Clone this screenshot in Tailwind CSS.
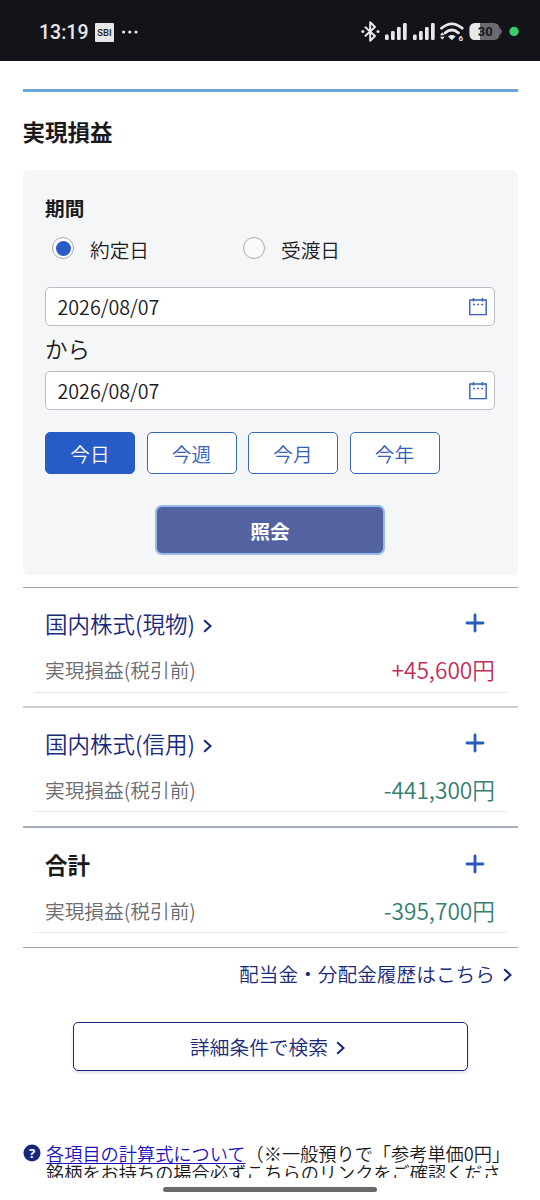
<!DOCTYPE html>
<html lang="ja">
<head>
<meta charset="utf-8">
<title>実現損益</title>
<script src="https://cdn.jsdelivr.net/npm/@tailwindcss/browser@4"></script>
</head>
<body class="bg-white">
<div class="w-[540px] h-[1200px] overflow-hidden flex flex-col font-['Noto_Sans_CJK_JP',sans-serif] font-[350] text-[19.7px] text-[#1a1a1c] leading-[30px] whitespace-nowrap">
  <header class="h-[61px] shrink-0 bg-[#121419] flex items-center pt-[3px] pl-[39px] pr-[21px] text-[#e8e8ea]">
    <span class="font-['Roboto',sans-serif] text-[19.5px] font-medium w-[49px] pt-[1px]">13:19</span>
    <span class="ml-[7px] w-[19px] h-[19px] rounded-[1px] bg-[#e6e6e6] text-[#222] font-['Roboto',sans-serif] font-medium text-[9.5px] leading-[20px] text-center">SBI</span>
    <svg class="ml-[7px]" width="18" height="6" viewBox="0 0 18 6" fill="#e8e8ea"><circle cx="2.6" cy="3" r="1.6"/><circle cx="8.8" cy="3" r="1.6"/><circle cx="15" cy="3" r="1.6"/></svg>
    <svg class="ml-auto" width="159" height="24" viewBox="0 0 159 24" fill="#e8e8ea">
      <path d="M5.500 7.200 15 16 10.200 20.800V2.200L15 7 5.500 15.800" fill="none" stroke="#e8e8ea" stroke-width="2" stroke-linejoin="round" stroke-linecap="round"/>
      <circle cx="2.800" cy="11.500" r="1.500"/><circle cx="18" cy="11.500" r="1.500"/>
      <rect x="25" y="14.500" width="3.700" height="5.500" rx="1.300"/><rect x="31" y="11" width="3.700" height="9" rx="1.300"/><rect x="37" y="7" width="3.700" height="13" rx="1.300"/><rect x="43" y="3" width="3.700" height="17" rx="1.300"/>
      <rect x="53" y="14.500" width="3.700" height="5.500" rx="1.300"/><rect x="59" y="11" width="3.700" height="9" rx="1.300"/><rect x="65" y="7" width="3.700" height="13" rx="1.300"/><rect x="71" y="3" width="3.700" height="17" rx="1.300"/>
      <path d="M81.500 8.200Q91.800-.4 102.200 8.200M85.200 12.800Q91.800 7.300 98.400 12.800" fill="none" stroke="#e8e8ea" stroke-width="2.800" stroke-linecap="round"/>
      <path d="M88 16.400Q91.800 13.600 95.600 16.400L91.800 20.300ZM80 15.200 82.300 12.300 84.600 15.200ZM80 16.800 82.300 19.700 84.600 16.800Z"/>
      <text x="98.500" y="20.500" font-family="Roboto" font-weight="700" font-size="8">6</text>
      <rect x="109.500" y="3" width="30" height="17" rx="5.500" fill="#6c6c70"/><path d="M140 8.500Q143 11.500 140 14.500Z" fill="#6c6c70" stroke="#6c6c70"/>
      <path d="M115 3H120V20H115A5.500 5.500 0 0 1 109.500 14.500V8.500A5.500 5.500 0 0 1 115 3Z"/>
      <text x="117.800" y="16" font-family="Roboto" font-weight="700" font-size="13" fill="#17191d">30</text>
      <circle cx="154" cy="11.500" r="4.700" fill="#35cf66"/>
    </svg>
  </header>

  <main class="px-[22.500px] flex flex-col">
    <div class="mt-[28px] h-[2.500px] bg-[#69a4d2]"></div>
    <h1 class="mt-[23px] h-[32px] leading-[32px] text-[22.500px] font-bold">実現損益</h1>

    <section class="mt-[23px] h-[405px] rounded-[6px] bg-[#f4f6f8] px-[22.500px] pt-[23px] flex flex-col">
      <h2 class="font-bold">期間</h2>
      <div class="mt-[12px] flex items-center h-[30px]">
        <span class="ml-[7px] mb-[3px] w-[22px] h-[22px] rounded-full border border-[#aaaab2] bg-white flex items-center justify-center"><i class="w-[15px] h-[15px] rounded-full bg-[#275bc5]"></i></span>
        <span class="ml-[16px] w-[59px]">約定日</span>
        <span class="ml-[94px] mb-[3px] w-[22px] h-[22px] rounded-full border border-[#aaaab2] bg-[#fafafa]"></span>
        <span class="ml-[16px]">受渡日</span>
      </div>
      <div class="mt-[22px] h-[39px] border-[1.500px] border-[#babdc5] rounded-[5px] bg-white flex items-center justify-between pl-[11.500px] pr-[7px]">
        <span class="pt-[2px]">2026/08/07</span>
        <svg class="mt-[1px]" width="18" height="18" viewBox="0 0 18 18" fill="none" stroke="#3460b5" stroke-width="1.400"><path d="M.8 2H17.200V16.600H.8ZM4.500 0V3.500M13.500 0V3.500"/><path d="M4.200 6.500H6M8.200 6.500H10M12.200 6.500H14"/></svg>
      </div>
      <div class="h-[45px] leading-[44px] text-[22.500px]">から</div>
      <div class="h-[39px] border-[1.500px] border-[#babdc5] rounded-[5px] bg-white flex items-center justify-between pl-[11.500px] pr-[7px]">
        <span class="pt-[2px]">2026/08/07</span>
        <svg class="mt-[1px]" width="18" height="18" viewBox="0 0 18 18" fill="none" stroke="#3460b5" stroke-width="1.400"><path d="M.8 2H17.200V16.600H.8ZM4.500 0V3.500M13.500 0V3.500"/><path d="M4.200 6.500H6M8.200 6.500H10M12.200 6.500H14"/></svg>
      </div>
      <div class="mt-[22px] flex gap-[11.500px] text-center leading-[41px] text-[#3460b5]">
        <span class="w-[90px] h-[42.500px] rounded-[5px] border border-[#275bc5] bg-[#275bc5] text-white">今日</span>
        <span class="w-[90px] h-[42.500px] rounded-[5px] border-[1.500px] border-[#3868b9] bg-white">今週</span>
        <span class="w-[90px] h-[42.500px] rounded-[5px] border-[1.500px] border-[#3868b9] bg-white">今月</span>
        <span class="w-[90px] h-[42.500px] rounded-[5px] border-[1.500px] border-[#3868b9] bg-white">今年</span>
      </div>
      <button class="self-center mt-[31px] w-[230px] h-[50px] pt-[2px] rounded-[7px] border-[2.500px] border-[#96b9ea] bg-[#5363a1] text-white font-bold">照会</button>
    </section>

    <section class="mt-[12px] h-[119px] border-t border-[#a5a5a8] px-[11px]">
      <div class="h-[105px] border-b border-[#e4e4e6] px-[11.500px] pt-[18.500px]">
        <div class="flex h-[34px] items-center text-[22.500px] text-[#18287b]">
          <span>国内株式(現物)</span>
          <svg class="ml-[8px] mt-[5px]" width="9" height="14" viewBox="0 0 9 14" fill="none" stroke="#18287b" stroke-width="2.100"><path d="M1.200 1.200 7.500 7 1.200 12.800"/></svg>
          <svg class="ml-auto mr-[10px] mb-[1px]" width="20" height="20" viewBox="0 0 20 20" stroke="#275bb9" stroke-width="2.800" stroke-linecap="round"><path d="M10 2V18M2 10H18"/></svg>
        </div>
        <div class="mt-[12.500px] flex items-center justify-between h-[34px]"><span class="text-[#6b6b70]">実現損益(税引前)</span><span class="text-[22.700px] text-[#bf2f59]">+45,600円</span></div>
      </div>
    </section>
    <section class="h-[120px] border-t-2 border-[#d0d0d4] px-[11px]">
      <div class="h-[104px] border-b border-[#ebebed] px-[11.500px] pt-[18.500px]">
        <div class="flex h-[34px] items-center text-[22.500px] text-[#18287b]">
          <span>国内株式(信用)</span>
          <svg class="ml-[8px] mt-[5px]" width="9" height="14" viewBox="0 0 9 14" fill="none" stroke="#18287b" stroke-width="2.100"><path d="M1.200 1.200 7.500 7 1.200 12.800"/></svg>
          <svg class="ml-auto mr-[10px] mb-[1px]" width="20" height="20" viewBox="0 0 20 20" stroke="#275bb9" stroke-width="2.800" stroke-linecap="round"><path d="M10 2V18M2 10H18"/></svg>
        </div>
        <div class="mt-[12.500px] flex items-center justify-between h-[34px]"><span class="text-[#6b6b70]">実現損益(税引前)</span><span class="text-[22.700px] text-[#35806f]">-441,300円</span></div>
      </div>
    </section>
    <section class="h-[122px] border-t-[2.500px] border-b border-t-[#a5adba] border-b-[#a5a5a8] px-[11px]">
      <div class="h-[105px] border-b-[1.500px] border-[#ededef] px-[11.500px] pt-[19px]">
        <div class="flex h-[34px] items-center text-[22.500px] font-bold">
          <span>合計</span>
          <svg class="ml-auto mr-[10px]" width="20" height="20" viewBox="0 0 20 20" stroke="#275bb9" stroke-width="2.800" stroke-linecap="round"><path d="M10 2V18M2 10H18"/></svg>
        </div>
        <div class="mt-[13px] flex items-center justify-between h-[34px]"><span class="text-[#6b6b70]">実現損益(税引前)</span><span class="text-[22.700px] text-[#35806f]">-395,700円</span></div>
      </div>
    </section>

    <a class="mt-[11px] flex items-center justify-end h-[30px] pr-[5.500px] text-[#18287b]">配当金・分配金履歴はこちら
      <svg class="ml-[8px] mt-[2px]" width="9" height="14" viewBox="0 0 9 14" fill="none" stroke="#18287b" stroke-width="2.200"><path d="M1.200 1.200 7.500 7 1.200 12.800"/></svg>
    </a>
    <button class="self-center mt-[33px] w-[395px] h-[49px] rounded-[5px] border border-[#18287b] shadow-[0_2px_3px_rgba(40,40,120,0.15)] flex items-center justify-center pt-[2px] pr-[5px] text-[#18287b]">詳細条件で検索
      <svg class="ml-[8px] mt-[2px]" width="9" height="14" viewBox="0 0 9 14" fill="none" stroke="#18287b" stroke-width="2.200"><path d="M1.200 1.200 7.500 7 1.200 12.800"/></svg>
    </button>

    <div class="mt-[73px] h-[34px] overflow-hidden flex gap-[5px] text-[18.200px]">
      <svg class="shrink-0 ml-[0.500px]" width="18" height="18" viewBox="0 0 18 18"><circle cx="9" cy="9" r="8.500" fill="#18287b"/><text x="9" y="13.500" text-anchor="middle" font-family="Noto Sans" font-weight="700" font-size="13" fill="#fff">?</text></svg>
      <p class="leading-[19px]"><a class="text-[#1c10c0] underline decoration-1 underline-offset-[2px]">各項目の計算式について</a>（※一般預りで「参考単価0円」<br>銘柄をお持ちの場合必ずこちらのリンクをご確認くださ</p>
    </div>
  </main>
  <div class="mt-[9px] ml-[163px] w-[214px] h-[5px] rounded-full bg-[#6a6a6a] shrink-0"></div>
</div>
</body>
</html>
